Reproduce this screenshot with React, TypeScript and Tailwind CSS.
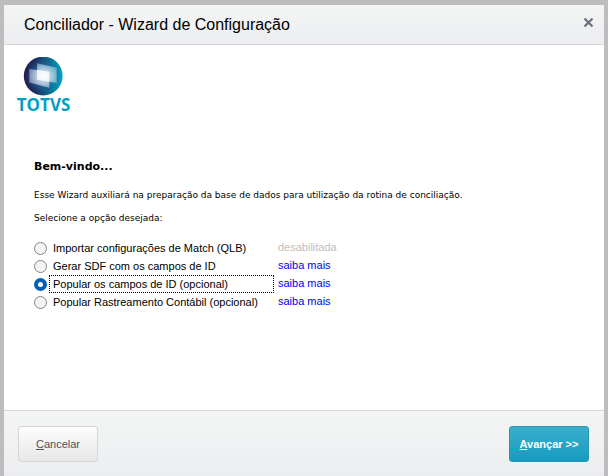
import React, { useState } from 'react'

const options = [
  { id: 'match', label: 'Importar configurações de Match (QLB)', enabled: false },
  { id: 'sdf', label: 'Gerar SDF com os campos de ID', enabled: true },
  { id: 'campos', label: 'Popular os campos de ID (opcional)', enabled: true },
  { id: 'rastreamento', label: 'Popular Rastreamento Contábil (opcional)', enabled: true },
]

const Logo = () => (
  <svg className="w-[60px] h-[60px]" viewBox="0 0 60 60" role="img" aria-label="TOTVS">
    <defs>
      <linearGradient id="sphere" x1="0" y1="0.5" x2="1" y2="0.5">
        <stop offset="0" stopColor="#252050" />
        <stop offset="0.3" stopColor="#1b2f62" />
        <stop offset="0.55" stopColor="#12567f" />
        <stop offset="0.8" stopColor="#0785a8" />
        <stop offset="1" stopColor="#08a3c4" />
      </linearGradient>
      <radialGradient id="light" cx="0.5" cy="0.5" r="0.5">
        <stop offset="0" stopColor="#3f9fd0" stopOpacity="0.9" />
        <stop offset="0.6" stopColor="#2d7fb5" stopOpacity="0.4" />
        <stop offset="1" stopColor="#1b5f95" stopOpacity="0" />
      </radialGradient>
      <radialGradient id="glow" cx="0.5" cy="0.5" r="0.5">
        <stop offset="0" stopColor="#fff" stopOpacity="0.9" />
        <stop offset="1" stopColor="#fff" stopOpacity="0" />
      </radialGradient>
      <clipPath id="panes">
        <path d="M21 6.300 40.700 10.700V26L33.300 25v5.700L13.300 25.500V12L21 13Z" />
      </clipPath>
    </defs>
    <circle cx="27.200" cy="19" r="19.400" fill="url(#sphere)" />
    <circle cx="27.200" cy="19" r="18" fill="url(#light)" />
    <path d="M21 6.300 40.700 10.700V26L21 22.500Z" fill="#c4dcea" fillOpacity="0.5" />
    <path d="M13.300 12 33.300 14.800V30.700L13.300 25.500Z" fill="#ccd0e8" fillOpacity="0.55" />
    <path d="M21 13 33.300 14.800V24.700L21 22.500Z" fill="#fff" fillOpacity="0.7" />
    <ellipse cx="27.500" cy="19" rx="14" ry="13" fill="url(#glow)" clipPath="url(#panes)" />
    <text x="27.500" y="54" textAnchor="middle" className="font-['Open_Sans',sans-serif] text-[17px] font-bold" fill="#049fc0">
      TOTVS
    </text>
  </svg>
)

export default function App() {
  const [selected, setSelected] = useState('campos')

  return (
    <div className="min-h-screen flex flex-col bg-[#bdbdbd] px-1 pt-[5px] font-['Liberation_Sans',sans-serif] text-black">
      <div className="flex-1 flex flex-col bg-white">
        <header className="flex items-center justify-between h-10 pl-5 pr-[10px] border-b border-[#d5d5d6] bg-linear-to-b from-[#f4f6f5] to-[#ecedf0]">
          <h1 className="text-[16px] leading-5">Conciliador - Wizard de Configuração</h1>
          <button type="button" aria-label="Fechar" className="pb-1">
            <svg className="w-[11px] h-[11px]" viewBox="0 0 11 11" stroke="#69717f" strokeWidth="2.200">
              <path d="M1.500 1.500l8 8M9.500 1.500l-8 8" />
            </svg>
          </button>
        </header>

        <main className="flex-1 px-[30px] pb-6">
          <div className="-ml-[18px] pt-3">
            <Logo />
          </div>

          <div className="pt-[42px] font-['DejaVu_Sans',sans-serif]">
            <h2 className="text-[11px] leading-4 font-bold">Bem-vindo...</h2>
            <p className="pt-3 text-[9px] leading-4">
              Esse Wizard auxiliará na preparação da base de dados para utilização da rotina de conciliação.
            </p>
            <p className="pt-[7px] text-[9px] leading-4">Selecione a opção desejada:</p>
          </div>

          <div role="radiogroup" aria-label="Selecione a opção desejada" className="pt-[13px] text-[11px] leading-4">
            {options.map((option) => (
              <div key={option.id} className="flex items-center h-[18px]">
                <input
                  id={option.id}
                  type="radio"
                  name="opcao"
                  checked={selected === option.id}
                  onChange={() => setSelected(option.id)}
                  className="appearance-none shrink-0 w-[13px] h-[13px] mr-[2px] rounded-full border border-[#858585] bg-[#f3f3f3] checked:border-4 checked:border-[#0060b9] checked:bg-white"
                />
                <label
                  htmlFor={option.id}
                  className={`w-[225px] mr-1 pl-[3px] border border-dotted whitespace-nowrap ${
                    selected === option.id ? 'border-black' : 'border-transparent'
                  }`}
                >
                  {option.label}
                </label>
                {option.enabled ? (
                  <a href="#" className="pb-[2px] text-[#0000ff]">saiba mais</a>
                ) : (
                  <span className="pb-[2px] text-[#c0c0c0]">desabilitada</span>
                )}
              </div>
            ))}
          </div>
        </main>

        <footer className="flex items-start justify-between px-[14px] pt-[15px] pb-[14px] border-t border-[#d5d5d6] bg-linear-to-b from-[#f4f6f5] to-[#ecedf0] text-[11px]">
          <button
            type="button"
            className="w-20 h-9 rounded-[3px] border border-[#d5d5d7] bg-linear-to-b from-[#fdfdfd] to-[#e8e8e8] text-[#4d5060]"
          >
            <u>C</u>ancelar
          </button>
          <button
            type="button"
            className="w-20 h-9 mr-px rounded-[3px] border border-[#2b97b4] bg-linear-to-b from-[#3aadcc] to-[#119cc0] font-bold text-white"
          >
            <u>A</u>vançar &gt;&gt;
          </button>
        </footer>
      </div>
    </div>
  )
}
